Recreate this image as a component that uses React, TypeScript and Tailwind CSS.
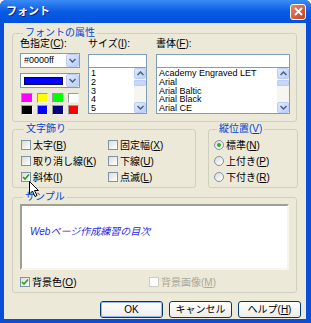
import React from 'react';

const font = "font-['Liberation_Sans','Noto_Sans_CJK_JP',sans-serif]";

const M = ({ k }: { k: string }) => (
  <>
    (<span className="underline">{k}</span>)
  </>
);

const Check = ({ checked = false, disabled = false }: { checked?: boolean; disabled?: boolean }) => (
  <span
    className={`w-[10px] h-[10px] shrink-0 border flex items-center justify-center ${
      disabled ? 'border-[#cdcbbf] bg-white' : 'border-[#7d93a9] bg-gradient-to-br from-[#dedcd3] to-white'
    }`}
  >
    {checked && (
      <svg width="8" height="8" viewBox="0 0 8 8">
        <path d="M1 4 L3 6 L7 1.5" fill="none" stroke="#21a121" strokeWidth="1.6" />
      </svg>
    )}
  </span>
);

const Radio = ({ checked = false }: { checked?: boolean }) => (
  <span className="w-[10px] h-[10px] shrink-0 rounded-full border border-[#7d93a9] bg-gradient-to-br from-[#dedcd3] to-white flex items-center justify-center">
    {checked && <span className="w-[4px] h-[4px] rounded-full bg-[#2bb02b]" />}
  </span>
);

const Arrow = ({ up = false }: { up?: boolean }) => (
  <svg width="7" height="5" viewBox="0 0 7 5">
    <path d={up ? 'M0.5 4 L3.5 1 L6.5 4' : 'M0.5 1 L3.5 4 L6.5 1'} fill="none" stroke="#4d6185" strokeWidth="1.5" />
  </svg>
);

const SbButton = ({ up = false, h = 'h-[11px]' }: { up?: boolean; h?: string }) => (
  <div className={`${h} rounded-[2px] border border-[#b9cdf6] bg-gradient-to-br from-[#e0e9fd] to-[#bccefa] flex items-center justify-center`}>
    <Arrow up={up} />
  </div>
);

const ListBox = ({ items, width }: { items: string[]; width: string }) => (
  <div className={`${width} flex flex-col`}>
    <div className="h-[14px] bg-white border border-[#7f9db9]" />
    <div className="h-[46px] bg-white border border-[#7f9db9] border-t-0 flex">
      <div className="flex-1 pl-[2px] pt-[1px] text-[9px] leading-[8.8px] text-black overflow-hidden">
        {items.map((i) => (
          <div key={i} className="whitespace-nowrap">{i}</div>
        ))}
      </div>
      <div className="w-[12px] flex flex-col bg-[#f6f5f0]">
        <SbButton up />
        <div className="h-[6px] mt-[1px] rounded-[1px] border border-[#b9cdf6] bg-[#c8d6fb]" />
        <div className="flex-1" />
        <SbButton />
      </div>
    </div>
  </div>
);

const Group = ({ title, className, children }: { title: React.ReactNode; className: string; children: React.ReactNode }) => (
  <fieldset className={`border border-[#d0d0bf] rounded-[3px] ${className}`}>
    <legend className="ml-[3px] px-[2px] text-[10px] leading-[10px] text-[#0046d5]">{title}</legend>
    {children}
  </fieldset>
);

const Row = ({ children, className = '' }: { children: React.ReactNode; className?: string }) => (
  <div className={`h-[16px] flex items-center gap-[2px] text-[10px] ${className}`}>{children}</div>
);

const Btn = ({ children, def = false }: { children: React.ReactNode; def?: boolean }) => (
  <div className="w-[63px] h-[17px] rounded-[3px] border border-[#003c74] bg-gradient-to-b from-white to-[#ecebe6] flex items-center justify-center text-[10px] text-black">
    <div className={`w-full h-full rounded-[2px] flex items-center justify-center ${def ? 'border border-[#97b8f0]' : ''}`}>{children}</div>
  </div>
);

export default function App() {
  const swatches = ['#ff00ff', '#ffff00', '#00ff00', '#ffffff', '#000000', '#0000ff', '#000080', '#ff0000'];
  return (
    <div className={`w-[311px] h-[323px] bg-[#0a4ed8] rounded-t-[6px] flex flex-col ${font}`}>
      <div className="h-[23px] shrink-0 flex items-center justify-between pl-[6px] pr-[5px] rounded-t-[6px] bg-gradient-to-b from-[#3a8cf5] via-[#0a5be4] to-[#0052de]">
        <span className="text-white font-bold text-[11px] [text-shadow:1px_1px_0_#0a1f7a]">フォント</span>
        <div className="w-[16px] h-[16px] rounded-[3px] border border-white bg-gradient-to-br from-[#e9856a] to-[#c4401c] flex items-center justify-center">
          <svg width="9" height="9" viewBox="0 0 9 9">
            <path d="M1 1 L8 8 M8 1 L1 8" stroke="white" strokeWidth="1.8" />
          </svg>
        </div>
      </div>
      <div className="flex-1 ml-[4px] mr-[5px] mb-[4px] bg-[#ece9d8] relative flex flex-col pl-[8px] text-black">
        <Group title="フォントの属性" className="w-[285px] mt-[5px] pl-[7px] pb-[6px]">
          <div className="flex">
            <div className="w-[60px] flex flex-col">
              <div className="h-[12px] leading-[12px] text-[10px]">色指定<M k="C" />:</div>
              <div className="mt-[3px] h-[15px] bg-white border border-[#7f9db9] flex">
                <div className="flex-1 pl-[3px] text-[9px] leading-[13px]">#0000ff</div>
                <SbButton h="h-[13px] w-[13px]" />
              </div>
              <div className="mt-[5px] h-[15px] bg-white border border-[#7f9db9] flex">
                <div className="flex-1 flex items-center pl-[3px] pr-[3px]">
                  <div className="w-full h-[8px] bg-[#0000ff] border border-[#000060]" />
                </div>
                <SbButton h="h-[13px] w-[13px]" />
              </div>
              <div className="mt-[5px] ml-[1px] grid grid-cols-4 gap-x-[4px] gap-y-[2px] w-[58px]">
                {swatches.map((c, i) => (
                  <div key={i} className="h-[10px] border border-t-[#9a9a9a] border-l-[#9a9a9a] border-r-[#f4f4f4] border-b-[#f4f4f4]" style={{ backgroundColor: c }} />
                ))}
              </div>
            </div>
            <div className="ml-[8px] flex flex-col">
              <div className="h-[12px] leading-[12px] text-[10px]">サイズ<M k="I" />:</div>
              <div className="mt-[4px]">
                <ListBox width="w-[59px]" items={['1', '2', '3', '4', '5']} />
              </div>
            </div>
            <div className="ml-[9px] flex flex-col">
              <div className="h-[12px] leading-[12px] text-[10px]">書体<M k="F" />:</div>
              <div className="mt-[4px]">
                <ListBox width="w-[134px]" items={['Academy Engraved LET', 'Arial', 'Arial Baltic', 'Arial Black', 'Arial CE']} />
              </div>
            </div>
          </div>
        </Group>
        <div className="flex mt-[2px] gap-[12px]">
          <Group title="文字飾り" className="w-[184px] pl-[8px] pt-[3px] pb-[2px]">
            <div className="flex">
              <div className="w-[87px] flex flex-col">
                <Row><Check /><span>太字<M k="B" /></span></Row>
                <Row><Check /><span>取り消し線<M k="K" /></span></Row>
                <Row><Check checked /><span>斜体<M k="I" /></span></Row>
              </div>
              <div className="flex flex-col">
                <Row><Check /><span>固定幅<M k="X" /></span></Row>
                <Row><Check /><span>下線<M k="U" /></span></Row>
                <Row><Check /><span>点滅<M k="L" /></span></Row>
              </div>
            </div>
          </Group>
          <Group title={<>縦位置<M k="V" /></>} className="w-[90px] pl-[5px] pt-[3px] pb-[2px]">
            <Row><Radio checked /><span>標準<M k="N" /></span></Row>
            <Row><Radio /><span>上付き<M k="P" /></span></Row>
            <Row><Radio /><span>下付き<M k="R" /></span></Row>
          </Group>
        </div>
        <Group title="サンプル" className="w-[285px] mt-[4px] px-[7px] pb-[2px]">
          <div className="mt-[2px] h-[66px] bg-white border-2 border-t-[#a09f95] border-l-[#a09f95] border-r-[#f6f5ef] border-b-[#f6f5ef] pl-[8px] pt-[12px]">
            <span className="italic text-[10px] text-[#2a2ae6]">Webページ作成練習の目次</span>
          </div>
          <div className="mt-[4px] flex">
            <Row className="w-[129px]"><Check checked /><span>背景色<M k="O" /></span></Row>
            <Row className="text-[#aca899]"><Check disabled /><span>背景画像<M k="M" /></span></Row>
          </div>
        </Group>
        <div className="mt-[8px] flex justify-end gap-[6px] pr-[5px]">
          <Btn def>OK</Btn>
          <Btn>キャンセル</Btn>
          <Btn>ヘルプ<M k="H" /></Btn>
        </div>
        <svg className="absolute left-[25px] top-[158px]" width="12" height="17" viewBox="0 0 12 17">
          <path d="M0.5 0.5 L0.5 13 L3.5 10 L6 15.5 L8 14.5 L5.5 9.5 L9.5 9.5 Z" fill="white" stroke="black" strokeWidth="1" />
        </svg>
      </div>
    </div>
  );
}
